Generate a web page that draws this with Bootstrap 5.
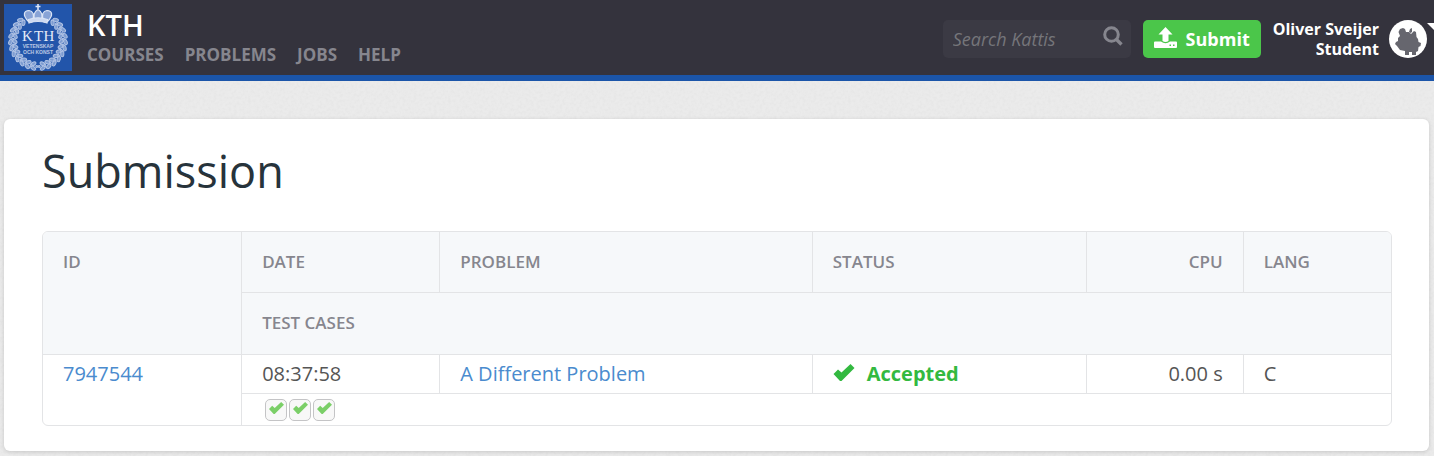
<!DOCTYPE html>
<html lang="en">
<head>
<meta charset="utf-8">
<meta name="viewport" content="width=device-width, initial-scale=1">
<title>Submission 7947544 – KTH Kattis</title>
<link href="https://cdn.jsdelivr.net/npm/bootstrap@5.3.0/dist/css/bootstrap.min.css" rel="stylesheet">
<style>
body {
  font-family: "Open Sans", "Noto Sans", sans-serif;
  font-size: 20px;
  line-height: 28px;
  color: #555;
  background: #ebebeb url("data:image/svg+xml,%3Csvg xmlns='http://www.w3.org/2000/svg' width='200' height='200'%3E%3Cfilter id='n'%3E%3CfeTurbulence type='fractalNoise' baseFrequency='.35' numOctaves='2' stitchTiles='stitch'/%3E%3CfeColorMatrix values='0 0 0 0 .5 0 0 0 0 .5 0 0 0 0 .5 .2 0 0 0 -.07'/%3E%3C/filter%3E%3Crect width='200' height='200' filter='url(%23n)'/%3E%3C/svg%3E");
}
a { color: #4a8bce; text-decoration: none; }
.topbar { background: #34333d; border-bottom: 6px solid #1b55a9; padding: 4px 0 4px 4px; }
.crest { width: 68px; height: 67px; display: block; }
.titles { margin-left: 15px; padding-bottom: 2px; }
.site-name { font-size: 29px; line-height: 36px; font-weight: 600; color: #fff; }
.site-nav { gap: 21px; font-size: 17px; line-height: 24px; font-weight: 700; }
.site-nav a { color: #86868e; }
.tools { gap: 12px; padding-top: 2px; }
.search-box { width: 188px; height: 38px; background: #3b3a44; border-radius: 5px; padding: 0 8px 0 10px; }
.search-box input { font-size: 18px; font-style: italic; color: #ccc; background: none; border: 0; outline: 0; min-width: 0; padding: 0; }
.search-box input::placeholder { color: #75757a; opacity: 1; }
.search-box button { margin-bottom: 6px; }
.btn-send { --bs-btn-bg: #4bc64a; --bs-btn-color: #fff; --bs-btn-hover-bg: #3fb53e; --bs-btn-hover-color: #fff; width: 118px; height: 38px; font-size: 18px; font-weight: 700; line-height: 38px; border: 0; border-radius: 5px; gap: 9px; padding: 0; }
.btn-send svg { margin-bottom: 2px; }
.user-name { font-size: 16px; line-height: 20px; font-weight: 700; color: #fff; }
.avatar { width: 38px; height: 38px; margin-left: 10px; }
.caret-mark { width: 7px; height: 38px; }
.sheet { background: #fff; border-radius: 6px; margin: 38px 5px 5px 4px; padding: 22px 37px 25px 38px; box-shadow: 0 1px 4px rgba(0,0,0,.15); }
.sheet h1 { font-size: 45px; line-height: 60px; font-weight: 400; color: #27333b; margin-bottom: 30px; }
.runs { border-collapse: separate; border-spacing: 0; width: 100%; table-layout: fixed; border: 1px solid #e3e4e6; border-radius: 6px; overflow: hidden; }
.runs th, .runs td { padding: 5px 20px; vertical-align: top; border: 0 solid #e3e4e6; border-left-width: 1px; border-bottom-width: 1px; }
.runs th { background: #f6f8fa; color: #86868e; font-size: 17px; font-weight: 600; padding-top: 16px; padding-bottom: 16px; }
.runs .sub-head { padding-bottom: 17px; }
.runs .first { border-left-width: 0; }
.runs .last-row, .runs tbody .first { border-bottom-width: 0; }
.runs .cases { padding: 5px 20px 4px 23px; }
.case-list { gap: 2px; }
.case { width: 22px; height: 22px; border: 1px solid #c4c4c6; border-radius: 5px; background: #f8f8f8; }
.passed { color: #33b940; font-weight: 700; }
</style>
</head>
<body>
<svg class="d-none" xmlns="http://www.w3.org/2000/svg">
  <symbol id="tick" viewBox="0 0 21 17"><path d="M0 10 4.500 5.500 8 8.500 17 0 21 4 8 17H6.500Z" fill="currentColor"/></symbol>
</svg>
<header class="topbar d-flex align-items-center">
  <a href="#" aria-label="KTH">
    <svg class="crest" viewBox="0 0 68 67">
      <defs>
        <g id="leaf" fill="#8ea9d8" stroke="#c9d6ef" stroke-width="1">
          <ellipse cx="-2.600" cy="23.200" rx="2.800" ry="1.600" transform="rotate(-38 -2.600 23.200)"/>
          <ellipse cx="-2.400" cy="27.400" rx="2.800" ry="1.600" transform="rotate(32 -2.400 27.400)"/>
          <circle cx="1" cy="25.400" r="1"/>
        </g>
        <g id="spray"><use href="#leaf"/><use href="#leaf" transform="rotate(13)"/><use href="#leaf" transform="rotate(26)"/><use href="#leaf" transform="rotate(39)"/></g>
        <g id="branch"><use href="#spray" transform="rotate(5)"/><use href="#spray" transform="rotate(57)"/><use href="#leaf" transform="rotate(109)"/><use href="#leaf" transform="rotate(122)"/><use href="#leaf" transform="rotate(135)"/></g>
      </defs>
      <rect width="68" height="67" fill="#2255aa"/>
      <g transform="translate(34 37)" opacity=".85"><use href="#branch"/><use href="#branch" transform="scale(-1 1)"/></g>
      <path d="M25 20 20 9Q27 1 34 3Q41 1 48 9L43 20Q34 16 25 20Z" fill="#2255aa"/>
      <g fill="#88a3d6" stroke="#dbe4f5" stroke-width="1.200">
        <path d="M24.500 17.500C18 11 20 6.500 25 6.500Q31 7.500 29 16ZM43.500 17.500C50 11 48 6.500 43 6.500Q37 7.500 39 16ZM31 16Q28 9 34 5.500Q40 9 37 16Z"/>
        <path d="M34 0V5M31.500 2.500H36.500" stroke-width="1.600"/>
        <path d="M24.500 15.500Q34 12 43.500 15.500L43 19Q34 16 25 19Z" fill="#cdd9f0"/>
      </g>
      <g fill="#e6ecf8">
        <g font-family="Liberation Serif, serif" font-size="15" text-anchor="middle"><text x="23.500" y="37">K</text><text x="34.500" y="37">T</text><text x="45" y="37">H</text></g>
        <g opacity=".75" font-family="Liberation Sans, sans-serif" font-size="5" font-weight="700" text-anchor="middle"><text x="34" y="44">VETENSKAP</text><text x="34" y="50">OCH KONST</text></g>
      </g>
    </svg>
  </a>
  <div class="titles">
    <div class="site-name">KTH</div>
    <nav class="site-nav d-flex">
      <a href="#">COURSES</a><a href="#">PROBLEMS</a><a href="#">JOBS</a><a href="#">HELP</a>
    </nav>
  </div>
  <div class="tools d-flex align-items-center ms-auto">
    <form class="search-box d-flex align-items-center" role="search">
      <input class="flex-grow-1" type="search" placeholder="Search Kattis" aria-label="Search Kattis">
      <button class="btn p-0 border-0 lh-1 d-flex" type="button" aria-label="Search">
        <svg width="20" height="20" viewBox="0 0 20 20" fill="none" stroke="#86868e"><circle cx="8.500" cy="8.500" r="6.800" stroke-width="3"/><path d="m13.500 13.500 5 5" stroke-width="3.400"/></svg>
      </button>
    </form>
    <button class="btn btn-send d-flex align-items-center justify-content-center" type="button">
      <svg width="23" height="22" viewBox="0 0 23 22" fill="#fff"><path d="M11.500 0 18.500 7.500H14.500V14Q11.500 16 8.500 14V7.500H4.500Z"/><path fill-rule="evenodd" d="M1 14.500H7Q11.500 18 16 14.500H22Q23 14.500 23 15.500V20Q23 21 22 21H1Q0 21 0 20V15.500Q0 14.500 1 14.500ZM15.500 17.500V19H17V17.500ZM19 17.500V19H20.500V17.500Z"/></svg>
      <span>Submit</span>
    </button>
    <a href="#" class="user-name d-flex align-items-center">
      <span class="text-end">Oliver Sveijer<br>Student</span>
      <svg class="avatar" viewBox="0 0 38 38"><circle cx="19" cy="19" r="19" fill="#fff"/><path fill="#66666e" d="M11 9 14 8 16 9 17 12H20L22 14 25 11 27 12 27.500 17 29 19 29.500 22 32 23 31.500 26 29.500 27 29 31 27 32 27 35H23V32H20V35H16V31L11 30 8 26 6 24 7 22 9 21 9 18 11 16 9.500 12Z"/><path fill="#66666e" d="M21 9 23 8V12L21.500 13 20 12Z"/></svg>
      <svg class="caret-mark" viewBox="0 0 7 38"><path d="M0 3H7V10Z" fill="#fff"/></svg>
    </a>
  </div>
</header>
<main class="sheet">
  <h1>Submission</h1>
  <table class="runs">
    <colgroup><col style="width:14.7%"><col style="width:14.7%"><col style="width:27.63%"><col style="width:20.33%"><col style="width:11.64%"><col></colgroup>
    <thead>
      <tr><th class="first" rowspan="2">ID</th><th>DATE</th><th>PROBLEM</th><th>STATUS</th><th class="text-end">CPU</th><th>LANG</th></tr>
      <tr><th class="sub-head" colspan="5">TEST CASES</th></tr>
    </thead>
    <tbody>
      <tr>
        <td class="first" rowspan="2"><a href="#">7947544</a></td>
        <td>08:37:58</td>
        <td><a href="#">A Different Problem</a></td>
        <td class="passed"><div class="d-flex"><svg class="mt-1 me-2" width="22" height="17" aria-hidden="true"><use href="#tick"/></svg><span class="ms-1">Accepted</span></div></td>
        <td class="text-end">0.00 s</td>
        <td>C</td>
      </tr>
      <tr>
        <td class="cases last-row" colspan="5">
          <div class="case-list d-flex">
            <span class="case d-flex justify-content-center"><svg width="15" height="16" color="#7bcf68" role="img" aria-label="Test case 1 passed"><use href="#tick"/></svg></span>
            <span class="case d-flex justify-content-center"><svg width="15" height="16" color="#7bcf68" role="img" aria-label="Test case 2 passed"><use href="#tick"/></svg></span>
            <span class="case d-flex justify-content-center"><svg width="15" height="16" color="#7bcf68" role="img" aria-label="Test case 3 passed"><use href="#tick"/></svg></span>
          </div>
        </td>
      </tr>
    </tbody>
  </table>
</main>
<script src="https://cdn.jsdelivr.net/npm/bootstrap@5.3.0/dist/js/bootstrap.bundle.min.js"></script>
</body>
</html>
